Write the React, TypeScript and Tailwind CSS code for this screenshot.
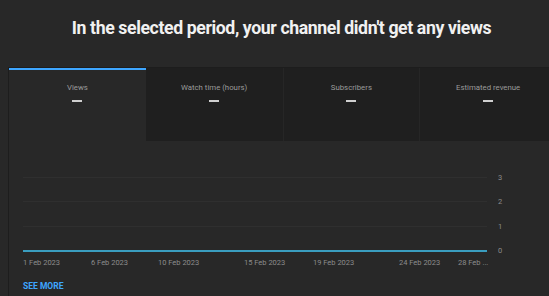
import React from 'react';

const tabs = [
  { label: 'Views', active: true },
  { label: 'Watch time (hours)', active: false },
  { label: 'Subscribers', active: false },
  { label: 'Estimated revenue', active: false },
];

// x offsets of the date ticks, measured from the chart's left edge
const xLabels = [
  { text: '1 Feb 2023', left: 0 },
  { text: '6 Feb 2023', left: 68 },
  { text: '10 Feb 2023', left: 135 },
  { text: '15 Feb 2023', left: 221 },
  { text: '19 Feb 2023', left: 290 },
  { text: '24 Feb 2023', left: 376 },
  { text: '28 Feb ...', left: 435 },
];

const yLabels = ['3', '2', '1', '0'];

export default function App() {
  return (
    <div
      className="w-[549px] h-[296px] overflow-hidden bg-[#282828] text-white"
      style={{ fontFamily: 'Roboto, "Liberation Sans", sans-serif' }}
    >
      {/* Heading */}
      <div className="h-[67px] pt-[17px] pl-[14px] text-center">
        <h1 className="text-[17.7px] leading-[22px] font-bold tracking-[-0.4px] text-[#f1f1f1]">
          In the selected period, your channel didn't get any views
        </h1>
      </div>

      {/* Card */}
      <div className="ml-[8px] w-[548px] border-l border-t border-[#1d1d1d] h-[229px]">
        {/* Metric tabs */}
        <div className="grid grid-cols-4 h-[73px]">
          {tabs.map((t, i) => (
            <div
              key={t.label}
              className={
                t.active
                  ? 'flex flex-col items-center border-t-2 border-[#3ea6ff] bg-[#282828]'
                  : i === 1
                  ? 'flex flex-col items-center bg-[#1f1f1f] pt-[2px]'
                  : 'flex flex-col items-center bg-[#1f1f1f] border-l border-[#262626] pt-[2px]'
              }
            >
              <span className="mt-[13px] text-[7.8px] leading-[10px] text-[#9a9a9a]">{t.label}</span>
              <span className="mt-[7px] w-[10px] h-[2px] bg-[#d0d0d0]" />
            </div>
          ))}
        </div>

        {/* Chart */}
        <div className="pt-[24px] pl-[14px]">
          {yLabels.map((y) => (
            <div key={y} className="flex items-center h-[24.5px]">
              <div
                className={
                  y === '0' ? 'w-[464px] h-[2px] bg-[#3a9dbf]' : 'w-[464px] h-px bg-[#2f2f2f]'
                }
              />
              <span className="ml-[11px] text-[7.5px] leading-none text-[#8c8c8c]">{y}</span>
            </div>
          ))}
          <div className="relative h-[8px] -mt-[4px]">
            {xLabels.map((x) => (
              <span
                key={x.text}
                className="absolute top-0 text-[7.5px] leading-none text-[#8c8c8c] whitespace-nowrap"
                style={{ left: x.left }}
              >
                {x.text}
              </span>
            ))}
          </div>
          <div className="mt-[15px] text-[8.5px] leading-none font-bold text-[#3ea6ff]">SEE MORE</div>
        </div>
      </div>
    </div>
  );
}
